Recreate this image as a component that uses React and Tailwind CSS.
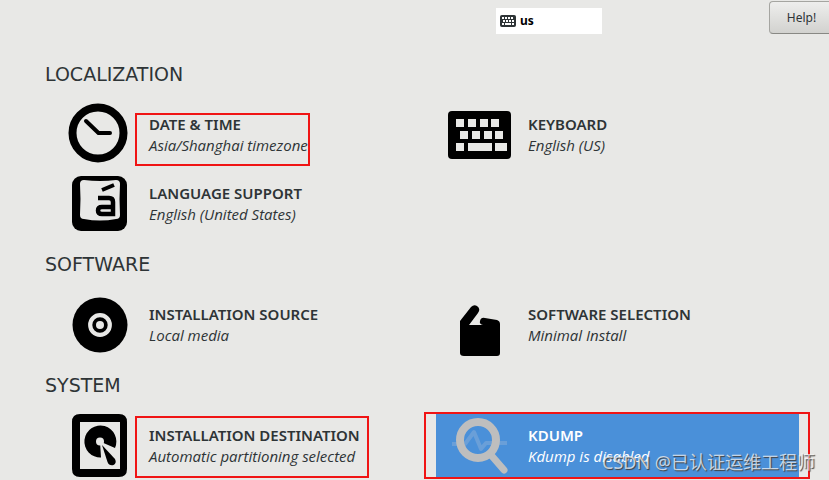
/**
 * Installation summary - grouped configuration spokes.
 */

const groups = [
  {
    title: 'LOCALIZATION',
    spokes: [
      { title: 'DATE & TIME', status: 'Asia/Shanghai timezone', Icon: ClockIcon, mark: 'left-[78px] top-[10px] h-[53px] w-[175px]' },
      { title: 'KEYBOARD', status: 'English (US)', Icon: KeyboardIcon },
      { title: 'LANGUAGE SUPPORT', status: 'English (United States)', Icon: LanguageIcon },
    ],
  },
  {
    title: 'SOFTWARE',
    spokes: [
      { title: 'INSTALLATION SOURCE', status: 'Local media', Icon: DiscIcon },
      { title: 'SOFTWARE SELECTION', status: 'Minimal Install', Icon: PackageIcon },
    ],
  },
  {
    title: 'SYSTEM',
    spokes: [
      { title: 'INSTALLATION DESTINATION', status: 'Automatic partitioning selected', Icon: DriveIcon, mark: 'left-[78px] top-[2px] h-[62px] w-[234px]' },
      { title: 'KDUMP', status: 'Kdump is disabled', Icon: KdumpIcon, selected: true, mark: '-left-3 -top-[2px] h-[67px] w-[386px]' },
    ],
  },
];

export default function App() {
  return (
    <div className="relative min-h-screen overflow-hidden bg-[#e8e8e6] font-['Noto_Sans','Noto_Sans_CJK_SC',sans-serif] text-[#2e3436]">
      <Header />

      <main className="flex flex-col gap-4 pl-[45px] pr-[30px] pt-7">
        {groups.map((group) => (
          <SpokeGroup key={group.title} group={group} />
        ))}
      </main>

      {/* Watermark */}
      <p className="pointer-events-none absolute bottom-1 right-[14px] whitespace-nowrap text-lg leading-7 text-white/70 [text-shadow:1px_1px_1px_#404040]">
        CSDN @已认证运维工程师
      </p>
    </div>
  );
}

function Header() {
  return (
    <header className="flex items-start justify-end gap-[167px]">
      <div className="mt-2 flex h-[26px] w-[106px] items-center gap-1 bg-white pl-1 text-xs font-bold text-black">
        <SmallKeyboardIcon />
        <span>us</span>
      </div>
      <button
        type="button"
        className="mt-px h-[33px] w-[60px] rounded-l border border-r-0 border-[#a5a5a1] border-b-[#888884] bg-linear-to-b from-[#eeeeed] to-[#d2d2cf] pl-1 text-xs"
      >
        Help!
      </button>
    </header>
  );
}

function SpokeGroup({ group }) {
  return (
    <section>
      <h2 className="h-[41px] font-['DejaVu_Sans',sans-serif] text-[19px] leading-6">{group.title}</h2>
      <div className="grid grid-cols-2 gap-x-4 gap-y-[5px] pl-3">
        {group.spokes.map((spoke) => (
          <Spoke key={spoke.title} spoke={spoke} />
        ))}
      </div>
    </section>
  );
}

function Spoke({ spoke }) {
  const { title, status, Icon, selected, mark } = spoke;
  return (
    <button
      type="button"
      className={`relative flex h-16 items-center gap-4 pl-3 text-left ${selected ? 'bg-[#4a90d9] text-white' : ''}`}
    >
      <Icon />
      <span className="flex flex-col whitespace-nowrap text-[15px] leading-[21px]">
        <span className="font-semibold">{title}</span>
        <span className="font-['Open_Sans',sans-serif] italic">{status}</span>
      </span>
      {mark && <span className={`pointer-events-none absolute border-2 border-[#f01414] ${mark}`} />}
    </button>
  );
}

function SpokeSvg({ children }) {
  return (
    <svg className="h-16 w-16 shrink-0 overflow-visible" viewBox="0 0 64 64" fill="none" aria-hidden="true">
      {children}
    </svg>
  );
}

function ClockIcon() {
  return (
    <SpokeSvg>
      <circle cx="29" cy="30" r="25.5" stroke="#000" strokeWidth="8" />
      <path d="M17 18L29.500 30H41" stroke="#000" strokeWidth="4" strokeLinecap="round" strokeLinejoin="round" />
    </SpokeSvg>
  );
}

function KeyboardIcon() {
  return (
    <SpokeSvg>
      <rect x="0" y="8" width="63" height="48" rx="4" fill="#000" />
      <path
        d="M8 16h8v8H8zM20 16h8v8h-8zM32 16h8v8h-8zM43 16h8v8h-8zM12 28h8v8h-8zM24 28h8v8h-8zM36 28h8v8h-8zM47 28h8v8h-8zM8 40h8v8H8zM20 40h24v8H20zM47 40h12v8H47z"
        fill="#e8e8e6"
      />
    </SpokeSvg>
  );
}

function LanguageIcon() {
  return (
    <SpokeSvg>
      <rect x="3" y="4" width="55" height="55" rx="9" fill="#000" />
      <path d="M15 8Q31 10 47 8Q51 8 51 12Q50 27 51 43Q51 47 47 47Q31 50 15 47Q11 47 11 43Q12 27 11 12Q11 8 15 8Z" fill="#e8e8e6" />
      <path d="M33 18L45 13" stroke="#000" strokeWidth="4" />
      <path d="M29 26H40Q44 26 44 30V42H33Q29 42 29 38.500Q29 35 33 35H44" stroke="#000" strokeWidth="4.500" />
    </SpokeSvg>
  );
}

function DiscIcon() {
  return (
    <SpokeSvg>
      <circle cx="31" cy="32" r="27.500" fill="#000" />
      <circle cx="31" cy="32" r="9.800" stroke="#e8e8e6" strokeWidth="4.200" />
      <circle cx="31" cy="32" r="4" fill="#e8e8e6" />
    </SpokeSvg>
  );
}

function PackageIcon() {
  return (
    <SpokeSvg>
      <path
        d="M12 28L23 14Q26 11 29 13Q33 16 30 20L21 32H35Q31 31 32 28Q33 24 37 25L49 27Q52 28 52 31V60Q52 63 49 63H16Q12 63 12 60Z"
        fill="#000"
      />
    </SpokeSvg>
  );
}

function DriveIcon() {
  return (
    <SpokeSvg>
      <path
        fillRule="evenodd"
        d="M11 0H50Q58 0 58 8V55Q58 63 50 63H11Q3 63 3 55V8Q3 0 11 0ZM11 8V55H51V8Z"
        fill="#000"
      />
      <path d="M31 27.500L46 34A16 16 0 1 0 32 43.500Z" fill="#000" />
      <circle cx="31" cy="27.500" r="4" fill="#e8e8e6" />
      <path d="M33 31L46 45Q48 49 44.500 51Q40 52 38.500 48Z" fill="#000" />
    </SpokeSvg>
  );
}

function KdumpIcon() {
  return (
    <SpokeSvg>
      <path d="M4 30H17L26 18L33 35L38 29H59" stroke="#6a9fd8" strokeWidth="4" strokeLinejoin="round" />
      <circle cx="30" cy="26" r="18" stroke="#bebebe" strokeWidth="8" />
      <path d="M43 41L56 56" stroke="#bebebe" strokeWidth="7" strokeLinecap="round" />
    </SpokeSvg>
  );
}

function SmallKeyboardIcon() {
  return (
    <svg className="h-3 w-4" viewBox="0 0 16 12" fill="none" aria-hidden="true">
      <rect x="0.500" y="0.500" width="15" height="11" rx="1" fill="#2e3436" stroke="#2e3436" />
      <path
        d="M2 2h2v2H2zM5 2h2v2H5zM8 2h2v2H8zM11 2h2v2h-2zM3 5h2v2H3zM6 5h2v2H6zM9 5h2v2H9zM12 5h2v2h-2zM2 8h2v2H2zM5 8h6v2H5zM12 8h2v2h-2z"
        fill="#fff"
      />
    </svg>
  );
}
